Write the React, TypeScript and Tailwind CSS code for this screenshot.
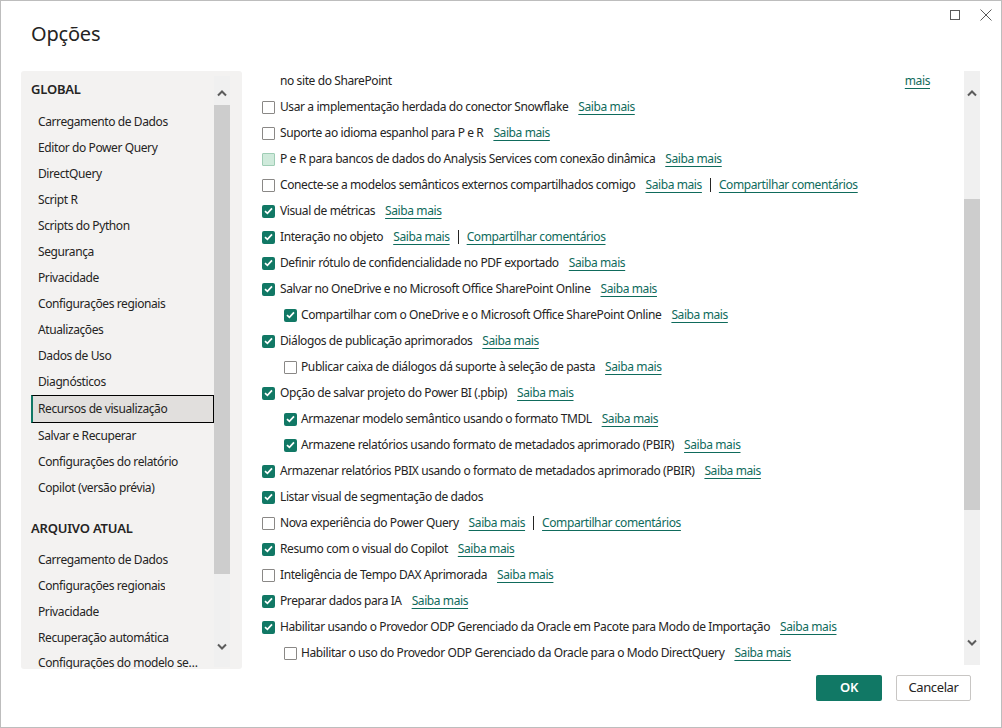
import React from "react";

type Row = {
  label: string;
  state: "on" | "off" | "dim";
  indent?: boolean;
  link?: boolean;
  feedback?: boolean;
};

const globalItems = [
  "Carregamento de Dados",
  "Editor do Power Query",
  "DirectQuery",
  "Script R",
  "Scripts do Python",
  "Segurança",
  "Privacidade",
  "Configurações regionais",
  "Atualizações",
  "Dados de Uso",
  "Diagnósticos",
  "Recursos de visualização",
  "Salvar e Recuperar",
  "Configurações do relatório",
  "Copilot (versão prévia)",
];

const fileItems = [
  "Carregamento de Dados",
  "Configurações regionais",
  "Privacidade",
  "Recuperação automática",
  "Configurações do modelo semântico",
];

const rows: Row[] = [
  { label: "Usar a implementação herdada do conector Snowflake", state: "off", link: true },
  { label: "Suporte ao idioma espanhol para P e R", state: "off", link: true },
  { label: "P e R para bancos de dados do Analysis Services com conexão dinâmica", state: "dim", link: true },
  { label: "Conecte-se a modelos semânticos externos compartilhados comigo", state: "off", link: true, feedback: true },
  { label: "Visual de métricas", state: "on", link: true },
  { label: "Interação no objeto", state: "on", link: true, feedback: true },
  { label: "Definir rótulo de confidencialidade no PDF exportado", state: "on", link: true },
  { label: "Salvar no OneDrive e no Microsoft Office SharePoint Online", state: "on", link: true },
  { label: "Compartilhar com o OneDrive e o Microsoft Office SharePoint Online", state: "on", indent: true, link: true },
  { label: "Diálogos de publicação aprimorados", state: "on", link: true },
  { label: "Publicar caixa de diálogos dá suporte à seleção de pasta", state: "off", indent: true, link: true },
  { label: "Opção de salvar projeto do Power BI (.pbip)", state: "on", link: true },
  { label: "Armazenar modelo semântico usando o formato TMDL", state: "on", indent: true, link: true },
  { label: "Armazene relatórios usando formato de metadados aprimorado (PBIR)", state: "on", indent: true, link: true },
  { label: "Armazenar relatórios PBIX usando o formato de metadados aprimorado (PBIR)", state: "on", link: true },
  { label: "Listar visual de segmentação de dados", state: "on" },
  { label: "Nova experiência do Power Query", state: "off", link: true, feedback: true },
  { label: "Resumo com o visual do Copilot", state: "on", link: true },
  { label: "Inteligência de Tempo DAX Aprimorada", state: "off", link: true },
  { label: "Preparar dados para IA", state: "on", link: true },
  { label: "Habilitar usando o Provedor ODP Gerenciado da Oracle em Pacote para Modo de Importação", state: "on", link: true },
  { label: "Habilitar o uso do Provedor ODP Gerenciado da Oracle para o Modo DirectQuery", state: "off", indent: true, link: true },
];

function Chevron({ down }: { down?: boolean }) {
  return (
    <svg width="10" height="7" viewBox="0 0 10 7" className="text-[#5c5c5c]">
      <path
        d={down ? "M1 1.5 L5 5.5 L9 1.5" : "M1 5.5 L5 1.5 L9 5.5"}
        fill="none"
        stroke="currentColor"
        strokeWidth="2"
      />
    </svg>
  );
}

function Box({ state }: { state: Row["state"] }) {
  if (state === "on") {
    return (
      <span className="flex h-[13px] w-[13px] shrink-0 items-center justify-center rounded-[2px] bg-[#117865]">
        <svg width="9" height="8" viewBox="0 0 9 8">
          <path d="M1 4.2 L3.4 6.4 L8 1.4" fill="none" stroke="white" strokeWidth="1.7" />
        </svg>
      </span>
    );
  }
  if (state === "dim") {
    return <span className="h-[13px] w-[13px] shrink-0 rounded-[1px] border border-[#9fcdb5] bg-[#cfeadb]" />;
  }
  return <span className="h-[13px] w-[13px] shrink-0 rounded-[1px] border border-[#8a8886] bg-white" />;
}

function Link({ children }: { children: React.ReactNode }) {
  return <span className="text-[#0f6b5c] underline underline-offset-[3px]">{children}</span>;
}

export default function App() {
  return (
    <div
      className="flex h-[728px] w-[1002px] flex-col border border-[#bdbdbd] bg-white text-[12px] tracking-[-0.4px] text-[#252423]"
      style={{ fontFamily: '"Segoe UI", "Noto Sans", sans-serif' }}
    >
      {/* title area */}
      <div className="h-[70px]">
        <div className="flex h-[18px] items-center justify-end gap-[20px] pr-[9px] pt-[9px]">
          <span className="h-[10px] w-[10px] border border-[#5a5a5a]" />
          <svg width="12" height="12" viewBox="0 0 12 12">
            <path d="M0.5 0.5 L11.5 11.5 M11.5 0.5 L0.5 11.5" stroke="#5a5a5a" strokeWidth="1" />
          </svg>
        </div>
        <div className="pl-[30px] pt-[1px] text-[20px] leading-[28px] tracking-[-0.2px] text-[#252423]">Opções</div>
      </div>

      {/* body */}
      <div className="flex h-[598px]">
        {/* sidebar */}
        <div className="ml-[20px] flex h-full w-[221px] overflow-hidden rounded-[3px] bg-[#f3f2f1] pr-[11px]">
          <div className="flex h-full w-[193px] flex-col overflow-hidden">
            <div className="flex h-[38px] shrink-0 items-center pl-[10px] text-[13px] font-semibold tracking-[-0.2px]">
              GLOBAL
            </div>
            {globalItems.map((it) =>
              it === "Recursos de visualização" ? (
                <div
                  key={it}
                  className="ml-[10px] flex h-[28px] shrink-0 items-center border border-black border-l-2 border-l-[#117865] bg-[#e1dfdd] pl-[5px]"
                >
                  {it}
                </div>
              ) : (
                <div key={it} className="ml-[10px] flex h-[26px] shrink-0 items-center pl-[7px]">
                  {it}
                </div>
              )
            )}
            <div className="h-[46px] shrink-0 pl-[10px] pt-[18px] text-[13px] font-semibold leading-[18px] tracking-[-0.2px]">
              ARQUIVO ATUAL
            </div>
            {fileItems.map((it, i) => (
              <div
                key={it}
                className={`ml-[10px] flex w-[170px] shrink-0 pl-[7px] ${
                  i === fileItems.length - 1 ? "h-[19px] items-end leading-[15px]" : "h-[26px] items-center"
                }`}
              >
                <span className="truncate">{it}</span>
              </div>
            ))}
          </div>
          <div className="mb-[2px] mt-[5px] flex w-[16px] flex-col bg-[#f0f0f0]">
            <div className="flex h-[29px] items-end justify-center pb-[8px]">
              <Chevron />
            </div>
            <div className="h-[469px] bg-[#cdcdcd]" />
            <div className="flex flex-1 items-end justify-center pb-[17px]">
              <Chevron down />
            </div>
          </div>
        </div>

        {/* content */}
        <div className="flex h-[594px] flex-1 pr-[21px]">
          <div className="flex-1 overflow-hidden pl-[20px]">
            <div className="-mt-[3px]">
              <div className="flex h-[26px] items-center pl-[18px] pr-[34px]">
                <span>no site do SharePoint</span>
                <span className="ml-auto">
                  <Link>mais</Link>
                </span>
              </div>
              {rows.map((r) => (
                <div key={r.label} className={`flex h-[26px] items-center ${r.indent ? "pl-[22px]" : ""}`}>
                  <Box state={r.state} />
                  <span className={r.indent ? "ml-[4px]" : "ml-[5px]"}>{r.label}</span>
                  {r.link && (
                    <span className="ml-[10px]">
                      <Link>Saiba mais</Link>
                    </span>
                  )}
                  {r.feedback && (
                    <>
                      <span className="mx-[8px] h-[14px] w-px bg-[#252423]" />
                      <Link>Compartilhar comentários</Link>
                    </>
                  )}
                </div>
              ))}
            </div>
          </div>
          <div className="flex w-[16px] flex-col bg-[#f0f0f0]">
            <div className="flex h-[128px] justify-center pt-[19px]">
              <Chevron />
            </div>
            <div className="h-[311px] bg-[#cdcdcd]" />
            <div className="flex flex-1 items-end justify-center pb-[19px]">
              <Chevron down />
            </div>
          </div>
        </div>
      </div>

      {/* footer */}
      <div className="flex flex-1 items-start justify-end gap-[14px] pr-[30px] pt-[6px]">
        <button className="h-[26px] w-[66px] rounded-[2px] bg-[#117865] text-[13px] font-semibold text-white">OK</button>
        <button className="h-[26px] w-[75px] rounded-[2px] border border-[#c8c6c4] bg-white text-[13px]">Cancelar</button>
      </div>
    </div>
  );
}
